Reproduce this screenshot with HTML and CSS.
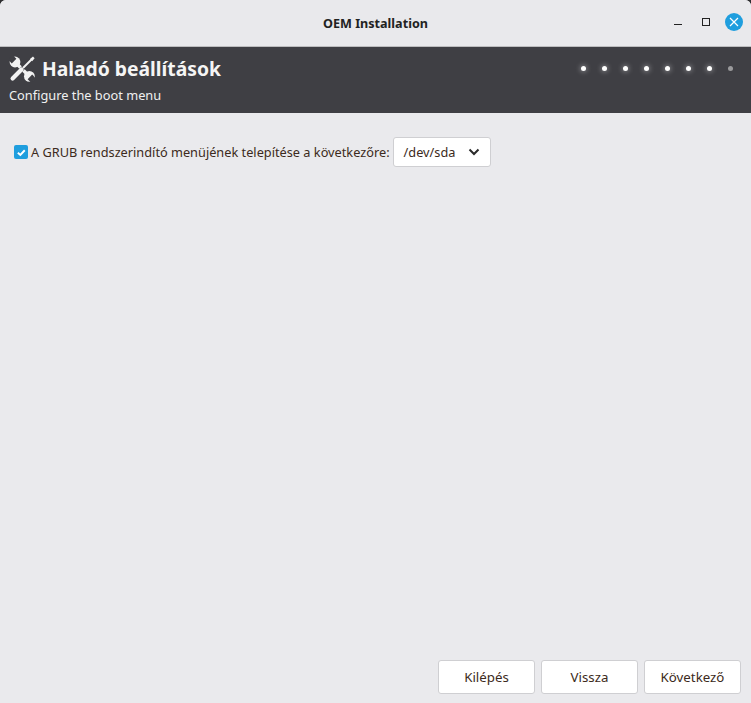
FILE: index.html
```html
<!DOCTYPE html>
<html lang="hu">
<head>
<meta charset="utf-8">
<title>OEM Installation</title>
<link rel="stylesheet" href="styles.css">
</head>
<body>
<div class="window">
  <header class="titlebar">
    <div class="title">OEM Installation</div>
    <div class="controls">
      <svg class="ctl" width="24" height="24" viewBox="0 0 24 24"><path d="M8 14.5h8" stroke="#222" stroke-width="1" fill="none"/></svg>
      <svg class="ctl" width="24" height="24" viewBox="0 0 24 24"><rect x="8.5" y="8.5" width="7" height="7" stroke="#222" stroke-width="1" fill="none"/></svg>
      <svg class="ctl" width="24" height="24" viewBox="0 0 24 24"><circle cx="12" cy="12" r="9" fill="#1f9ede"/><path d="M8 8l8 8M16 8l-8 8" stroke="#fff" stroke-width="1.2" fill="none"/></svg>
    </div>
  </header>
  <section class="banner">
    <div class="banner-text">
      <div class="heading">
        <svg class="tools" width="26" height="26" viewBox="0 0 26 26">
          <path d="M6.5 6.5 20 20" stroke="#f2f2f2" stroke-width="3.4" fill="none"/>
          <circle cx="6" cy="6" r="5.4" fill="#f2f2f2"/>
          <circle cx="20.4" cy="20.4" r="5.4" fill="#f2f2f2"/>
          <path d="M-1 3.6 3.6-1 7.4 2.8 2.8 7.4Z" fill="#3f3f44"/>
          <path d="M27 22.4 22.4 27 18.6 23.2 23.2 18.6Z" fill="#3f3f44"/>
          <path d="M22.5 3.5 9 17" stroke="#3f3f44" stroke-width="4" fill="none"/>
          <path d="M22.5 3.5 14 12" stroke="#f2f2f2" stroke-width="2" fill="none"/>
          <path d="M21 3 24 .6 25.6 2.2 23.2 5.2Z" fill="#f2f2f2"/>
          <path d="M12.5 13.5 3.6 22.4" stroke="#f2f2f2" stroke-width="4.2" stroke-linecap="round" fill="none"/>
        </svg>
        <h1 class="heading-text">Haladó beállítások</h1>
      </div>
      <p class="subtitle">Configure the boot menu</p>
    </div>
    <div class="dots">
      <i class="dot"></i><i class="dot"></i><i class="dot"></i><i class="dot"></i><i class="dot"></i><i class="dot"></i><i class="dot"></i><i class="dot dim"></i>
    </div>
  </section>
  <main class="content">
    <div class="grub-row">
      <span class="checkbox"><svg width="16" height="16" viewBox="0 0 16 16"><path d="M3.5 8.2 6.6 11 12 5.2" stroke="#fff" stroke-width="2.4" fill="none"/></svg></span>
      <span class="label">A GRUB rendszerindító menüjének telepítése a következőre:</span>
      <button class="select"><span>/dev/sda</span><svg width="12" height="8" viewBox="0 0 12 8"><path d="M1.5 1.5 6 6l4.5-4.5" stroke="#2a2a2a" stroke-width="2" fill="none"/></svg></button>
    </div>
  </main>
  <footer class="actions">
    <button class="btn">Kilépés</button>
    <button class="btn">Vissza</button>
    <button class="btn">Következő</button>
  </footer>
</div>
</body>
</html>
```
FILE: styles.css
```css
* { box-sizing: border-box; }
html, body { margin: 0; height: 100%; }
body { background: #2e2e30; font-family: "Noto Sans", "Open Sans", sans-serif; color: #3c2a20; }
.window { width: 751px; height: 703px; display: flex; flex-direction: column; background: #eaeaed; overflow: hidden; border-radius: 6px 6px 0 0; }
.titlebar { height: 47px; flex: none; position: relative; display: flex; align-items: center; justify-content: center; border-bottom: 1px solid #bdbdbf; background: #e9e9ec; }
.title { font-size: 12.6px; font-weight: 700; color: #222; }
.controls { position: absolute; right: 5px; top: 10px; display: flex; gap: 4px; align-items: center; }
.ctl { display: block; }
.banner { height: 66px; flex: none; background: #3f3f44; display: flex; justify-content: space-between; padding: 0 18px 0 9px; }
.banner-text { display: flex; flex-direction: column; }
.heading { display: flex; align-items: center; gap: 7px; height: 26px; margin-top: 9px; }
.tools { flex: none; }
.heading-text { margin: 0; font-size: 19.3px; font-weight: 700; color: #f5f5f5; line-height: 26px; }
.subtitle { margin: 4px 0 0; font-size: 12.8px; line-height: 18px; color: #f0f0f0; }
.dots { display: flex; gap: 16px; margin-top: 19px; }
.dot { width: 5px; height: 5px; border-radius: 50%; background: #fff; box-shadow: 0 0 5px 1px rgba(255,255,255,.35); }
.dot.dim { background: #9a9a9c; box-shadow: none; }
.content { flex: 1; padding: 24px 14px 0; }
.grub-row { display: flex; align-items: center; height: 30px; }
.checkbox { width: 14px; height: 14px; border-radius: 2px; background: #1f9ede; display: flex; align-items: center; justify-content: center; margin-right: 3px; }
.checkbox svg { width: 13px; height: 13px; }
.label { font-size: 12.75px; color: #3c2a20; margin-right: 3px; white-space: nowrap; }
.select { width: 98px; height: 30px; background: #fff; border: 1px solid #cfcfd2; border-radius: 3px; font: inherit; font-size: 12.75px; color: #3c2a20; display: flex; align-items: center; justify-content: space-between; padding: 0 10px 0 10px; }
.actions { flex: none; display: flex; justify-content: flex-end; gap: 6px; padding: 0 10px 9px; }
.btn { width: 97px; height: 34px; background: #fff; border: 1px solid #cfcfd2; border-radius: 3px; font: inherit; font-size: 13.3px; color: #3c2a20; padding: 0; }
```
